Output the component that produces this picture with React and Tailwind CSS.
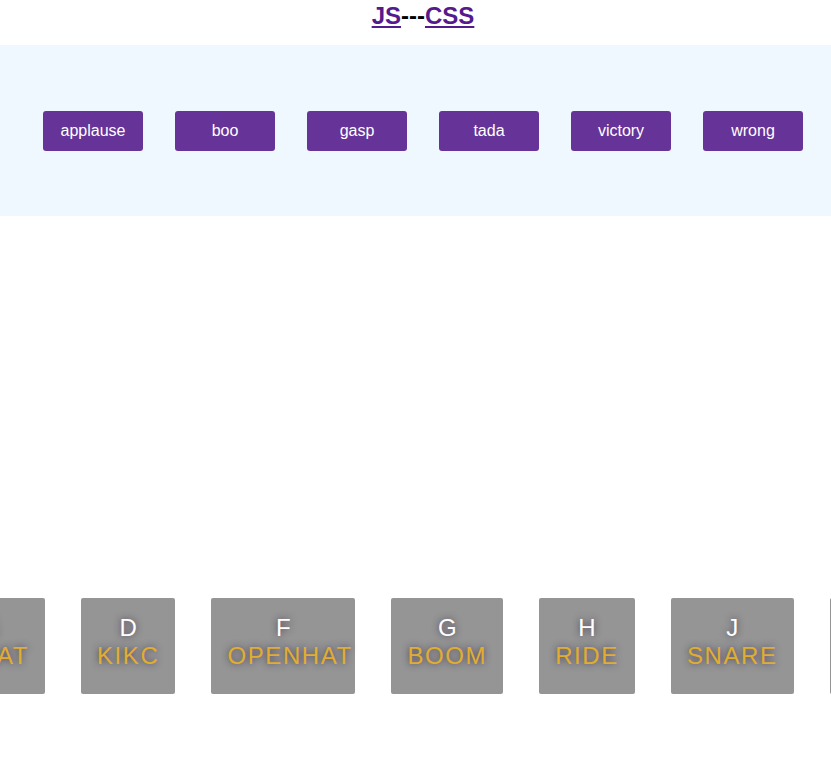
import React from "react";

const sounds = ["applause", "boo", "gasp", "tada", "victory", "wrong"];
const keys = [
  ["A", "CLAP"],
  ["S", "HIHAT"],
  ["D", "KIKC"],
  ["F", "OPENHAT"],
  ["G", "BOOM"],
  ["H", "RIDE"],
  ["J", "SNARE"],
  ["K", "TOM"],
  ["L", "TINK"],
];

export default function App() {
  return (
    <div className="w-full h-[757px] overflow-hidden bg-white font-['Liberation_Sans',Arial,sans-serif]">
      <div className="w-[846px]">
        <div className="h-[45px] flex justify-center pt-[2px] text-[24px] leading-[28px] font-bold text-black">
          <span>
            <a href="#" className="text-[#551a8b] underline">JS</a>
            ---
            <a href="#" className="text-[#551a8b] underline">CSS</a>
          </span>
        </div>
        <div className="h-[171px] bg-[#f0f8ff] flex items-center justify-center gap-[32px]">
          {sounds.map((s) => (
            <button
              key={s}
              className="w-[100px] h-[40px] shrink-0 rounded-[3px] bg-[#663399] text-white text-[16px] leading-[18px]"
            >
              {s}
            </button>
          ))}
        </div>
        <div className="h-[382px]" />
        <div className="h-[96px] flex justify-center">
          {keys.map(([k, s]) => (
            <div
              key={k}
              className="h-[96px] max-w-[144px] shrink-0 mx-[18px] px-[16px] pt-[17px] bg-[#959595] rounded-[2px] text-center whitespace-nowrap [text-shadow:0_0_7px_rgba(30,15,50,0.7)]"
            >
              <div className="text-white text-[24px] leading-[26px]">{k}</div>
              <div className="mt-[2px] text-[#e0ad30] text-[24px] leading-[26px] tracking-[0.1rem] text-left">{s}</div>
            </div>
          ))}
        </div>
      </div>
    </div>
  );
}
